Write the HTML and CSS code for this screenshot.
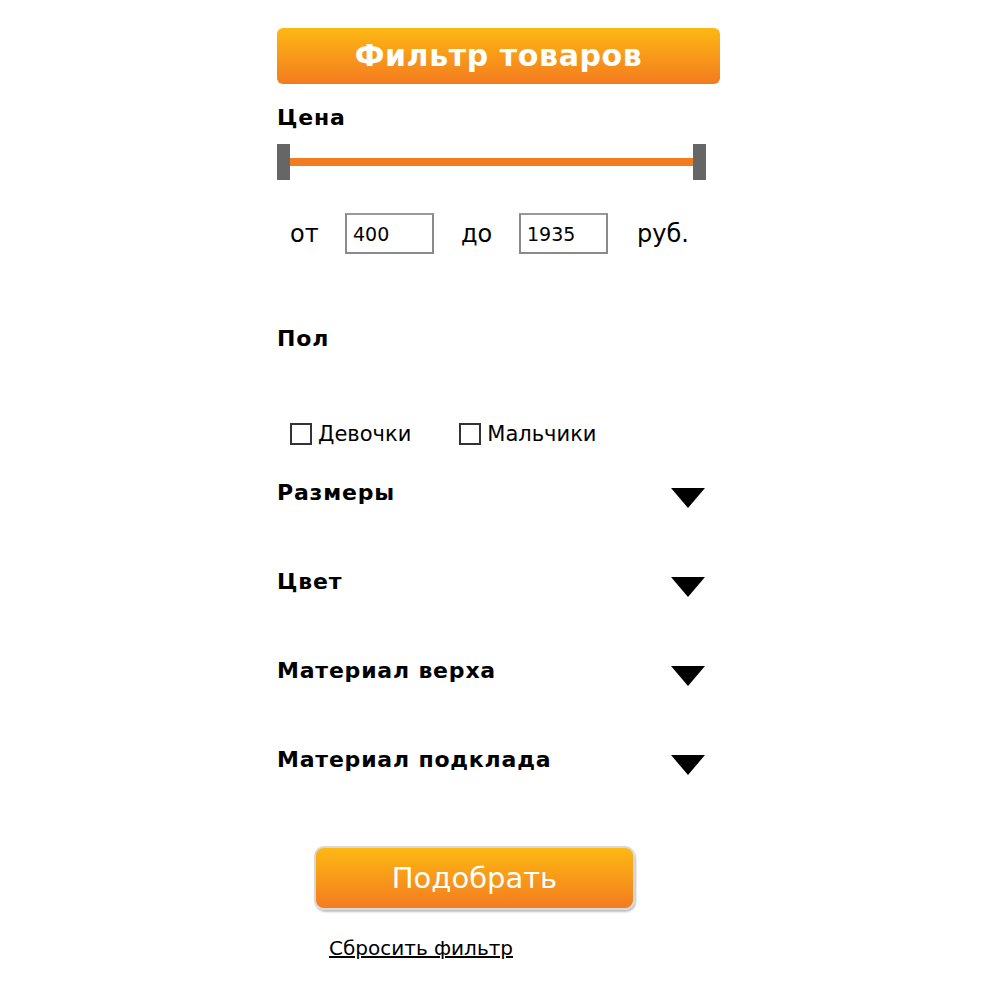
FILE: index.html
```html
<!DOCTYPE html>
<html lang="ru">
<head>
    <meta charset="UTF-8">
    <title>Фильтр товаров</title>
    <link rel="stylesheet" href="styles.css">
</head>
<body>

<div class="filter">
    <div class="filter-head">Фильтр товаров</div>

    <div class="filter-title price-title">Цена</div>
    <div class="slider">
        <span class="handle"></span>
        <span class="track"></span>
        <span class="handle"></span>
    </div>
    <div class="price-row">
        <span class="price-from">от</span>
        <input type="text" class="price-input" value="400">
        <span class="price-to">до</span>
        <input type="text" class="price-input" value="1935">
        <span class="price-cur">руб.</span>
    </div>

    <div class="filter-title sex-title">Пол</div>
    <div class="sex-row">
        <label class="check"><input type="checkbox">Девочки</label>
        <label class="check"><input type="checkbox">Мальчики</label>
    </div>

    <div class="section first">
        <span class="filter-title">Размеры</span>
        <span class="arrow"></span>
    </div>
    <div class="section">
        <span class="filter-title">Цвет</span>
        <span class="arrow"></span>
    </div>
    <div class="section">
        <span class="filter-title">Материал верха</span>
        <span class="arrow"></span>
    </div>
    <div class="section">
        <span class="filter-title">Материал подклада</span>
        <span class="arrow"></span>
    </div>

    <button type="button" class="btn">Подобрать</button>
    <a href="#" class="reset">Сбросить фильтр</a>
</div>

</body>
</html>
```

FILE: styles.css
```css
body {
    margin: 0;
    padding: 0;
    background-color: #fff;
    font-family: "DejaVu Sans", Tahoma, sans-serif;
    color: #000;
}
.filter {
    width: 443px;
    margin-left: 277px;
    padding-top: 28px;
}
.filter-head {
    height: 56px;
    line-height: 56px;
    border-radius: 6px;
    background: linear-gradient(to bottom, #fdb813, #f37b20);
    color: #fff;
    font-size: 30px;
    font-weight: bold;
    letter-spacing: 0.6px;
    text-align: center;
}
.filter-title {
    display: block;
    height: 24px;
    line-height: 24px;
    font-size: 22px;
    font-weight: bold;
    letter-spacing: 0.8px;
}
.price-title {
    margin-top: 22px;
}
.slider {
    display: flex;
    align-items: center;
    width: 429px;
    height: 36px;
    margin-top: 14px;
}
.handle {
    width: 13px;
    height: 36px;
    background-color: #666;
}
.track {
    flex: 1;
    height: 8px;
    background-color: #f37b20;
}
.price-row {
    display: flex;
    align-items: center;
    height: 41px;
    margin-top: 33px;
    font-size: 24px;
}
.price-from {
    margin-left: 13px;
    width: 55px;
}
.price-to {
    margin-left: 27px;
    width: 58px;
}
.price-cur {
    margin-left: 29px;
}
.price-input {
    box-sizing: border-box;
    width: 89px;
    height: 41px;
    padding: 0 6px;
    border: 2px solid #8a8a8a;
    border-top-color: #999;
    font-family: "DejaVu Sans", Tahoma, sans-serif;
    font-size: 19px;
    color: #000;
}
.sex-title {
    margin-top: 73px;
}
.sex-row {
    display: flex;
    align-items: center;
    height: 24px;
    margin-top: 71px;
    padding-left: 13px;
    font-size: 21px;
}
.check {
    display: flex;
    align-items: center;
    margin-right: 48px;
}
.check input {
    appearance: none;
    width: 22px;
    height: 22px;
    margin: 0 6px 0 0;
    border: 2px solid #333;
    box-sizing: border-box;
    background-color: #fff;
}
.section {
    display: flex;
    justify-content: space-between;
    align-items: flex-start;
    height: 24px;
    margin-top: 65px;
}
.section.first {
    margin-top: 35px;
}
.arrow {
    width: 0;
    height: 0;
    margin: 7px 15px 0 0;
    border-left: 17px solid transparent;
    border-right: 17px solid transparent;
    border-top: 20px solid #000;
}
.btn {
    display: block;
    width: 321px;
    height: 64px;
    margin: 74px 0 0 37px;
    border: 2px solid #d8d8d8;
    border-radius: 10px;
    background: linear-gradient(to bottom, #fdb813, #f37b20);
    box-shadow: 1px 2px 2px rgba(0, 0, 0, 0.25);
    color: #fff;
    font-family: "DejaVu Sans", Tahoma, sans-serif;
    font-size: 29px;
    cursor: pointer;
}
.reset {
    display: inline-block;
    margin: 26px 0 0 52px;
    color: #000;
    font-size: 20px;
    text-decoration: underline;
}
```
